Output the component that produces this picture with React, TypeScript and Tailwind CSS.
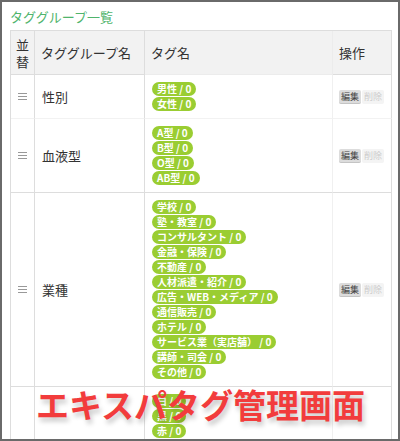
import React from "react";

const GROUPS = [
  { name: "性別", tags: ["男性", "女性"], faint: true },
  { name: "血液型", tags: ["A型", "B型", "O型", "AB型"] },
  {
    name: "業種",
    tags: [
      "学校",
      "塾・教室",
      "コンサルタント",
      "金融・保険",
      "不動産",
      "人材派遣・紹介",
      "広告・WEB・メディア",
      "通信販売",
      "ホテル",
      "サービス業（実店舗）",
      "講師・司会",
      "その他",
    ],
  },
  { name: "", tags: ["白", "黒", "赤"] },
];

function Grip() {
  return (
    <div className="flex flex-col gap-[2px]">
      <span className="block h-px w-[9px] bg-[#999]" />
      <span className="block h-px w-[9px] bg-[#999]" />
      <span className="block h-px w-[9px] bg-[#999]" />
    </div>
  );
}

function Tag({ label }: { label: string }) {
  return (
    <span className="rounded-full bg-[#9acd32] px-[5px] text-[10px] font-bold leading-[14px] text-white whitespace-nowrap">
      {label} / 0
    </span>
  );
}

export default function App() {
  return (
    <div
      className="relative h-[441px] w-[400px] overflow-hidden border-2 border-[#6a6a6a] bg-white"
      style={{ fontFamily: '"Noto Sans CJK JP", "Noto Sans", sans-serif' }}
    >
      <div className="pl-[8px] pt-[7px]">
        <h1 className="text-[13px] leading-[16px] text-[#4fb46c]">タググループ一覧</h1>

        <div className="mt-[5px] grid w-[382px] grid-cols-[24px_110px_188px_59px] border-l border-t border-[#dddddd] text-[#333]">
          {/* header */}
          <div className="flex h-[44px] flex-col items-center justify-center border-b border-r border-[#dddddd] bg-[#f2f2f2] text-[13px] leading-[17px]">
            <span>並</span>
            <span>替</span>
          </div>
          <div className="flex h-[44px] items-center border-b border-r border-[#dddddd] bg-[#f2f2f2] pl-[6px] text-[13px]">
            タググループ名
          </div>
          <div className="flex h-[44px] items-center border-b border-r border-[#ececec] bg-[#f2f2f2] pl-[6px] text-[13px]">
            タグ名
          </div>
          <div className="flex h-[44px] items-center border-b border-r border-[#dddddd] bg-[#f2f2f2] pl-[6px] text-[13px]">
            操作
          </div>

          {GROUPS.map((g, i) => {
            const b = g.faint ? "border-b-[#f2f2f2]" : "border-b-[#dddddd]";
            return (
              <React.Fragment key={i}>
                <div className={`flex items-center justify-center border-b border-r border-[#dddddd] ${b}`}>
                  {g.name && <Grip />}
                </div>
                <div className={`flex items-center border-b border-r border-[#dddddd] pl-[7px] text-[13px] ${b}`}>
                  {g.name}
                </div>
                <div className={`flex flex-col items-start gap-px border-b border-r border-[#f0f0f0] py-[7px] pl-[7px] ${b}`}>
                  {g.tags.map((t) => (
                    <Tag key={t} label={t} />
                  ))}
                </div>
                <div className={`flex items-center border-b border-r border-[#dddddd] pl-[6px] ${b}`}>
                  {g.name && (
                    <div className="flex gap-px">
                      <span className="h-[14px] w-[22px] rounded-[2px] border-b border-[#c4c4c4] bg-[#dcdcdc] text-center text-[9px] leading-[13px] text-[#444]">
                        編集
                      </span>
                      <span className="h-[14px] w-[22px] rounded-[2px] bg-[#f4f4f4] text-center text-[9px] leading-[14px] text-[#cccccc]">
                        削除
                      </span>
                    </div>
                  )}
                </div>
              </React.Fragment>
            );
          })}
        </div>
      </div>

      <div className="absolute left-[34px] top-[386px] text-[33px] font-bold leading-[33px] text-[#f23c3c] [text-shadow:2px_4px_5px_rgba(0,0,0,0.22)]">
        エキスパタグ管理画面
      </div>
    </div>
  );
}
